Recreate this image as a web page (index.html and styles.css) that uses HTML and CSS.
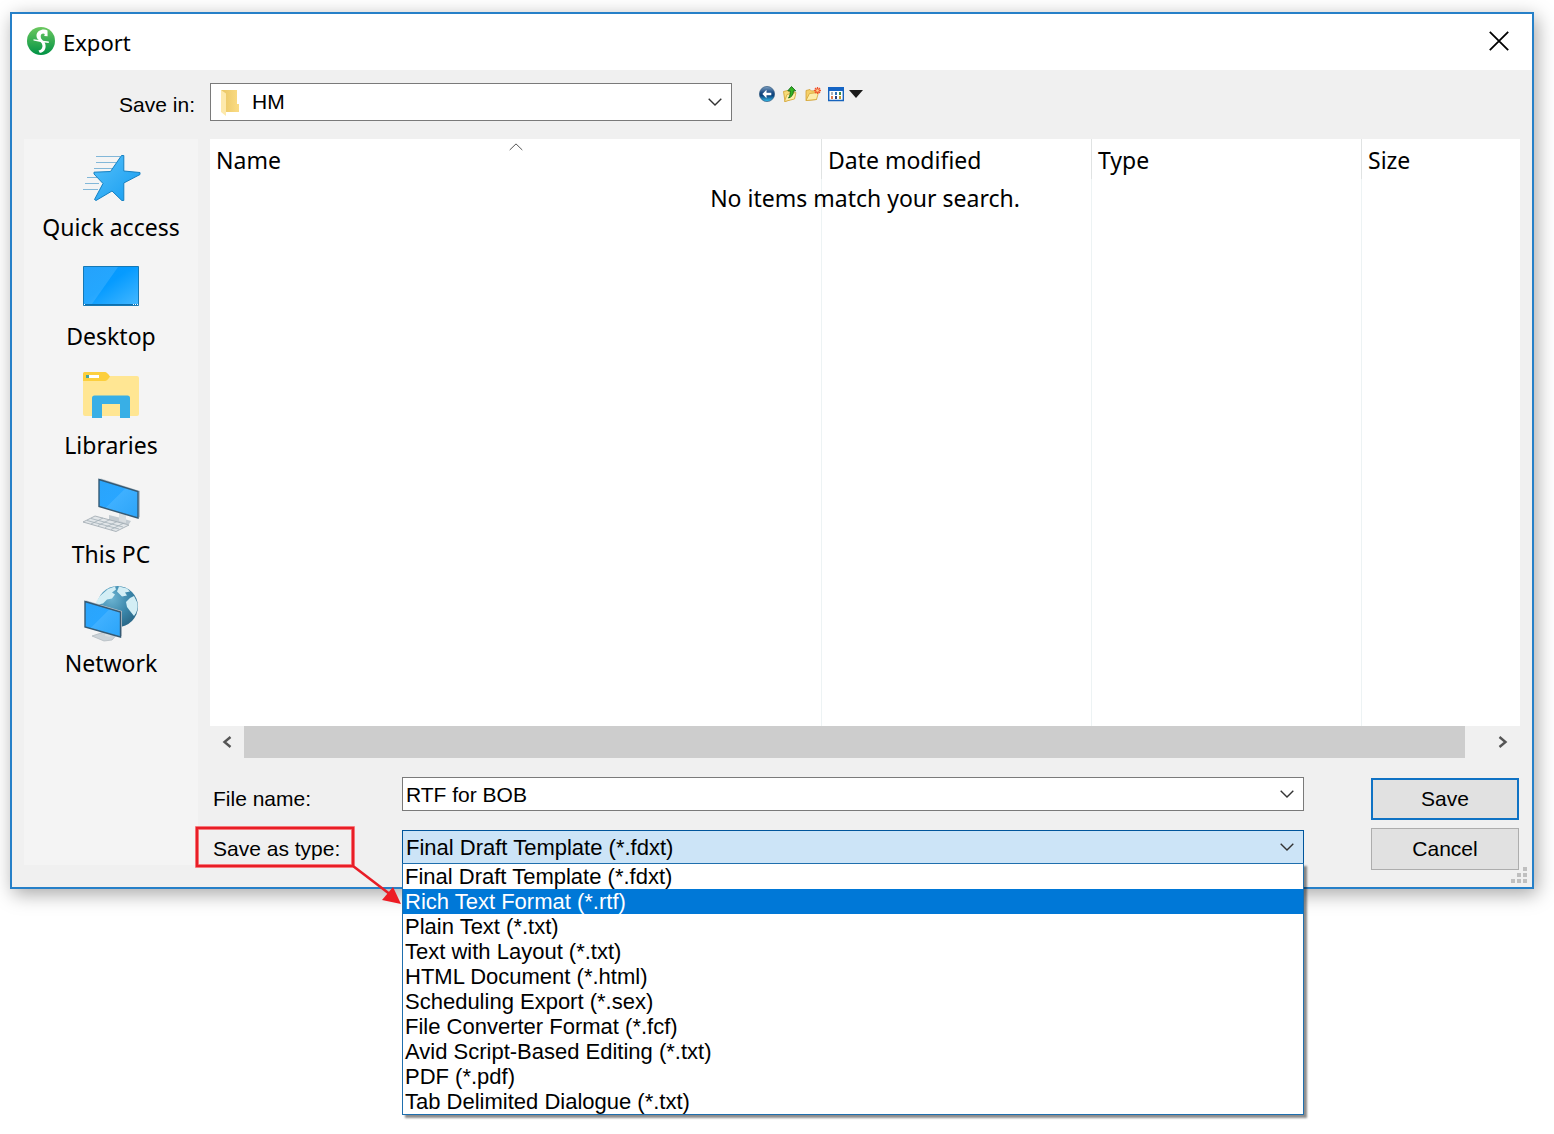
FILE: index.html
```
<!DOCTYPE html>
<html lang="en">
<head>
<meta charset="utf-8">
<meta name="viewport" content="width=device-width, initial-scale=1">
<title>Export</title>
<link rel="stylesheet" href="styles.css">
</head>
<body>
<svg class="defs" aria-hidden="true">
  <defs>
    <linearGradient id="screen" x1="0" y1="0" x2="1" y2="1"><stop offset="0" stop-color="#2aa4fb"/><stop offset=".45" stop-color="#29a6ff"/><stop offset=".46" stop-color="#3fb0ff"/><stop offset="1" stop-color="#2ba4f8"/></linearGradient>
    <linearGradient id="desk" x1="0" y1="0" x2="1" y2="1"><stop offset="0" stop-color="#0796fb"/><stop offset=".45" stop-color="#069bff"/><stop offset="1" stop-color="#45b8ff"/></linearGradient>
    <linearGradient id="star" x1="0" y1="0" x2="1" y2="1"><stop offset="0" stop-color="#55c0fa"/><stop offset="1" stop-color="#159cf0"/></linearGradient>
    <linearGradient id="leaf" x1="0" y1="0" x2="0" y2="1"><stop offset="0" stop-color="#6cc85f"/><stop offset="1" stop-color="#009245"/></linearGradient>
    <radialGradient id="globe" cx=".35" cy=".3" r=".75"><stop offset="0" stop-color="#6db4d2"/><stop offset=".6" stop-color="#3a86aa"/><stop offset="1" stop-color="#2a6888"/></radialGradient>
    <linearGradient id="orb" x1="0" y1="0" x2="0" y2="1"><stop offset="0" stop-color="#7f9fc0"/><stop offset=".4" stop-color="#1d4f86"/><stop offset=".6" stop-color="#0a437c"/><stop offset="1" stop-color="#35c0ee"/></linearGradient>
    <linearGradient id="fold" x1="0" y1="0" x2="1" y2="0"><stop offset="0" stop-color="#e9c664"/><stop offset="1" stop-color="#fbdc85"/></linearGradient>
  </defs>
</svg>

<main class="dialog">
  <header class="titlebar">
    <svg class="app-icon" viewBox="0 0 28 28" aria-hidden="true">
      <circle cx="14" cy="14" r="14" fill="url(#leaf)"/>
      <path d="M20.500 3.500C16.500 1.200 9.500 3.400 9.500 8.600c0 2.200.8 3.600 2.300 4.500l-5.300-.8v1.300l7 1.300c1.800 1.700 2.700 3.900 1.300 6.700-.7 1.300-2.300 1.800-3.300 1.800l1.200 2.400c2.800.2 5.900-2.400 5.900-6.300 0-1.900-.4-3.200-1.100-4l4.300.5v-1.500l-5.700-.8c-1.700-1.200-2.700-2.800-2.300-5.100.3-2 2.300-2.700 4-1.600l-.6 2 3.400.3z" fill="#fff"/>
    </svg>
    <h1 class="title">Export</h1>
    <button class="close" type="button" aria-label="Close">
      <svg viewBox="0 0 20 20" width="20" height="20"><path d="M.8.800l18.400 18.400M19.200.800L.8 19.200" stroke="#000" stroke-width="1.800"/></svg>
    </button>
  </header>

  <form class="content">
    <div class="lookin">
      <label class="lookin-label" for="folder">Save in:</label>
      <div class="folder-box">
        <svg class="folder-icon" viewBox="0 0 20 28" aria-hidden="true"><path d="M1 2h16v14l2 0v8H6z" fill="url(#fold)"/><path d="M1 2l5 3.500V28l-5-4z" fill="#fde9ac"/></svg>
        <select class="folder-select" id="folder"><option>HM</option></select>
        <svg class="chevron" viewBox="0 0 14 8" aria-hidden="true"><path d="M.7.700L7 7 13.300.700"/></svg>
      </div>
      <div class="tools">
        <button class="tool" type="button" aria-label="Back">
          <svg viewBox="0 0 16 16"><circle cx="8" cy="8" r="7.600" fill="url(#orb)" stroke="#31597f" stroke-width=".7"/><path d="M7.500 3.800L3.400 8l4.100 4.200V9.300h4.800V6.700H7.500z" fill="#fff"/></svg>
        </button>
        <button class="tool" type="button" aria-label="Up one level">
          <svg viewBox="0 0 16 16"><path d="M1.500 5.500l4-1 1 1 5.500-1 .5 7.500-9.500 3.500z" fill="#f8dc78" stroke="#cf9d2b" stroke-width=".8"/><path d="M2.500 15.500L5 8.500l9-2-1.500 6.500z" fill="#fdeeaa" stroke="#d6a636" stroke-width=".8"/><path d="M9.500.500L5.800 4.800h2.400c.3 3-.2 5.200-1.700 7.200 3-.8 5-3.200 4.900-7.200h2.300z" fill="#34b523" stroke="#146b16" stroke-width=".9"/></svg>
        </button>
        <button class="tool" type="button" aria-label="Create new folder">
          <svg viewBox="0 0 16 16"><path d="M1 14.500V4.500l4-1 1.500 1.500 5-.5v9z" fill="#f5cf68" stroke="#d19f35" stroke-width=".8"/><path d="M1 14.500L4.500 7.500l9-1-2 7z" fill="#fdedaa" stroke="#d6a636" stroke-width=".8"/><path d="M12.500 1v7M9 4.500h7M10 2l5 5M15 2l-5 5" stroke="#f0532d" stroke-width="1.300"/><circle cx="12.500" cy="4.500" r="1.300" fill="#ffd08a"/></svg>
        </button>
        <button class="tool view" type="button" aria-label="View menu">
          <svg viewBox="0 0 16 16"><path d="M.700 1.700h14.600v12.800H.700z" fill="#fff" stroke="#1663bd" stroke-width="1.400"/><path d="M0 1h16v4H0z" fill="#1464c4"/><g fill="#3070b5"><path d="M3 6h2v3H3z" fill="#a9b3bb"/><path d="M7 6h2v3H7z"/><path d="M11 6h2v3h-2z" fill="#398a4b"/><path d="M3 10h2v3H3z" fill="#e07a4a"/><path d="M7 10h2v3H7z" fill="#27427f"/><path d="M11 10h2v3h-2z" fill="#c39c31"/></g></svg>
          <svg class="caret" viewBox="0 0 14 8"><path d="M0 0h14L7 8z" fill="#1b1b1b"/></svg>
        </button>
      </div>
    </div>

    <nav class="places" aria-label="Places">
      <button class="place" type="button">
        <svg class="place-icon" viewBox="0 0 56 56"><g stroke="#5da3cf" stroke-width="1"><path d="M13 6.500h24M13 12.500h20M11 18.500h18M4 27.500h10M2 33.500h14M0 39.500h15" opacity=".75"/></g><path d="M38.500 5.500h2.300V21l16.200 1.500v2L40.800 33v17.500h-2L29 41 13 50.500l-1.500-1L20 33.500 11 24v-1.800l16.500-.7z" fill="url(#star)" stroke="#1480c2" stroke-width="1" stroke-linejoin="round"/></svg>
        <span>Quick access</span>
      </button>
      <button class="place" type="button">
        <svg class="place-icon" viewBox="0 0 56 56"><path d="M.500 7.500h55v39H.500z" fill="url(#desk)" stroke="#1578b5"/><path d="M1 8h34L9 45H1z" fill="#fff" opacity=".12"/><path d="M1 45.500h54" stroke="#0c6fae"/><path d="M1 45.500h1M50 45.500h1M52 45.500h1M54 45.500h1" stroke="#fff"/></svg>
        <span>Desktop</span>
      </button>
      <button class="place" type="button">
        <svg class="place-icon" viewBox="0 0 56 56"><path d="M0 8h54a2 2 0 0 1 2 2v36a2 2 0 0 1-2 2H2a2 2 0 0 1-2-2z" fill="#ffe693"/><path d="M0 5.500A1.500 1.500 0 0 1 1.500 4H22q2 0 5 4.500-3 4.500-5 4.500H0z" fill="#fccf3d"/><path d="M3 7h13v3H3z" fill="#fff"/><path d="M3 7h3v3H3z" fill="#42a5a0"/><path d="M9 50V30a2.500 2.500 0 0 1 2.500-2.500h33A2.500 2.500 0 0 1 47 30v20H37V36H19v14z" fill="#38afe6"/></svg>
        <span>Libraries</span>
      </button>
      <button class="place" type="button">
        <svg class="place-icon" viewBox="0 0 56 56"><path d="M26 38l12 3 10 3-2 3-10 1-10-4z" fill="#c3cbd1"/><path d="M36 36v8l7 2v-8z" fill="#d8dde0"/><path d="M0 45l12-6L46 48 33 54.500z" fill="#e2e6e9" stroke="#9ca6ad" stroke-width=".8"/><path d="M4 43.500l32 8.500M8 41.500l32 8.500M8 47l12-6M15 48.500l12-6M22 50.500l12-6M28 52.500l12-6" stroke="#a2aeb6" stroke-width=".8"/><path d="M16 2.500l2-1L57 14v26l-2 1z" fill="#b9c1c8"/><path d="M16 2.500l39 12V41L16 29.500z" fill="url(#screen)" stroke="#355a74" stroke-width="1.400"/></svg>
        <span>This PC</span>
      </button>
      <button class="place" type="button">
        <svg class="place-icon" viewBox="0 0 56 56"><circle cx="34.500" cy="20.500" r="20.500" fill="url(#globe)"/><path d="M17 10l8-7 7-2.500 1 3-4 3 3 2-3 4-5 1-4 4-5 1-2 5-2-2q2-7 6-11.500zM36 .500l8 2 3 3-5 1 2 3-5 1-5-5zM47 12l4-2 3.500 7q1 8-3.500 13l-4-5-3-4-1-5z" fill="#d3eef5"/><path d="M9 50l12-4 12 3.500-4 4.500-8 1z" fill="#ccd3d8" stroke="#adb6bc" stroke-width=".7"/><path d="M22 44v6l5 1v-6z" fill="#d8dde0"/><path d="M2 15.500l1.500-1L39 25v25l-2 1z" fill="#b9c1c8"/><path d="M2 15.500l35.500 10.500v25L2 41z" fill="url(#screen)" stroke="#355a74" stroke-width="1.400"/></svg>
        <span>Network</span>
      </button>
    </nav>

    <section class="files">
      <div class="list">
        <table class="table">
          <colgroup><col><col class="col-date"><col class="col-type"><col class="col-size"></colgroup>
          <thead><tr>
            <th scope="col" aria-sort="ascending">Name<svg class="sort" viewBox="0 0 14 8" aria-hidden="true"><path d="M.7 7L7 .9 13.300 7"/></svg></th>
            <th scope="col">Date modified</th><th scope="col">Type</th><th scope="col">Size</th>
          </tr></thead>
          <tbody><tr><td></td><td></td><td></td><td></td></tr></tbody>
        </table>
        <p class="empty">No items match your search.</p>
      </div>
      <div class="scrollbar">
        <button class="scroll-btn" type="button" aria-label="Scroll left"><svg viewBox="0 0 10 12"><path d="M8.500 1L2.500 6l6 5"/></svg></button>
        <div class="thumb"></div>
        <button class="scroll-btn" type="button" aria-label="Scroll right"><svg viewBox="0 0 10 12"><path d="M1.500 1l6 5-6 5"/></svg></button>
      </div>

      <div class="form">
        <div class="fields">
          <label class="field-label" for="filename">File name:</label>
          <div class="combo">
            <input class="control" id="filename" type="text" value="RTF for BOB">
            <svg class="chevron" viewBox="0 0 14 8" aria-hidden="true"><path d="M.7.700L7 7 13.300.700"/></svg>
          </div>
          <label class="field-label marked" for="filetype">Save as type:
            <svg class="callout" width="212" height="86" viewBox="0 0 212 86" aria-hidden="true"><g fill="none" stroke="#fb9a9c" stroke-width="4"><path d="M4 4h156v38H4z"/></g><path d="M4 4h156v38H4zM160 42l38 29" fill="none" stroke="#e81e27" stroke-width="2.600"/><path d="M208 80l-19-4 11-13z" fill="#ed1c24"/></svg>
          </label>
          <div class="combo open">
            <select class="control" id="filetype"><option>Final Draft Template (*.fdxt)</option></select>
            <svg class="chevron" viewBox="0 0 14 8" aria-hidden="true"><path d="M.7.700L7 7 13.300.700"/></svg>
            <ul class="menu" role="listbox" aria-label="Save as type">
              <li role="option">Final Draft Template (*.fdxt)</li>
              <li role="option" class="active" aria-selected="true">Rich Text Format (*.rtf)</li>
              <li role="option">Plain Text (*.txt)</li>
              <li role="option">Text with Layout (*.txt)</li>
              <li role="option">HTML Document (*.html)</li>
              <li role="option">Scheduling Export (*.sex)</li>
              <li role="option">File Converter Format (*.fcf)</li>
              <li role="option">Avid Script-Based Editing (*.txt)</li>
              <li role="option">PDF (*.pdf)</li>
              <li role="option">Tab Delimited Dialogue (*.txt)</li>
            </ul>
          </div>
        </div>
        <div class="actions">
          <button class="btn primary" type="submit">Save</button>
          <button class="btn" type="button">Cancel</button>
        </div>
      </div>
    </section>
  </form>
  <svg class="grip" viewBox="0 0 16 16" aria-hidden="true"><path d="M12 0h4v4h-4zM6 6h4v4H6zM12 6h4v4h-4zM0 12h4v4H0zM6 12h4v4H6zM12 12h4v4h-4z" fill="#bfbfbf"/></svg>
</main>
</body>
</html>
```
FILE: styles.css
```
* { box-sizing: border-box; }

body {
  min-height: 100vh;
  margin: 0;
  padding: 12px 20px 12px 10px;
  background: #fff;
  color: #000;
  font: 21px/25px "Liberation Sans", Arial, sans-serif;
}

button, input, select { font: inherit; color: inherit; }
button { border: 0; background: none; padding: 0; }

.defs { position: absolute; width: 0; height: 0; }

.dialog {
  position: relative;
  border: 2px solid #2680c8;
  background: #f0f0f0;
  box-shadow: 3px 5px 18px rgba(0, 0, 0, .35);
}

.titlebar {
  display: flex;
  align-items: center;
  gap: 8px;
  height: 56px;
  padding: 0 23px 2px 15px;
  background: #fff;
}
.app-icon { width: 28px; height: 28px; }
.title {
  flex: 1;
  margin: 0;
  padding-top: 2px;
  font: 400 22px/32px "Noto Sans", sans-serif;
}
.close { display: flex; }

.content {
  display: grid;
  grid-template-columns: 174px minmax(0, 1fr);
  column-gap: 12px;
  row-gap: 18px;
  padding: 13px 12px 17px;
}

.lookin {
  grid-column: 1 / -1;
  display: grid;
  grid-template-columns: 171px minmax(0, 522px) auto;
  column-gap: 15px;
  justify-content: start;
  height: 38px;
}
.lookin-label { justify-self: end; align-self: center; padding-top: 4px; }
.folder-box {
  display: flex;
  align-items: center;
  padding: 0 9px;
  border: 1px solid #7a7a7a;
  background: #fff;
}
.folder-icon { width: 20px; height: 28px; margin-right: 12px; }
.folder-select {
  flex: 1;
  min-width: 0;
  padding: 0 0 2px;
  border: 0;
  appearance: none;
  background: none;
}
.chevron { width: 14px; height: 8px; fill: none; stroke: #333; stroke-width: 1.400; pointer-events: none; }

.tools {
  display: flex;
  align-items: flex-start;
  gap: 7px;
  padding: 3px 0 0 12px;
}
.tool { display: flex; align-items: center; gap: 5px; }
.tool svg { width: 16px; height: 16px; }
.tool .caret { width: 14px; height: 8px; }

.places {
  display: flex;
  flex-direction: column;
  gap: 15px;
  margin-bottom: 5px;
  padding-top: 11px;
  background: #f4f4f4;
}
.place {
  display: flex;
  flex-direction: column;
  align-items: center;
  gap: 4px;
  font: 23px/34px "Noto Sans", sans-serif;
}
.place-icon { width: 56px; height: 56px; overflow: visible; }

.list { position: relative; background: #fff; font: 23px/32px "Noto Sans", sans-serif; }
.table {
  width: 100%;
  height: 587px;
  border-collapse: separate;
  border-spacing: 0;
  table-layout: fixed;
}
.col-date, .col-type { width: 270px; }
.col-size { width: 158px; }
.table th {
  position: relative;
  height: 40px;
  padding: 2px 6px 0;
  border-right: 1px solid #e0e3e3;
  font-weight: 400;
  text-align: left;
}
.table td { padding: 0; border-right: 1px solid #edf3f4; }
.table th:last-child, .table td:last-child { border-right: 0; }
.sort {
  position: absolute;
  top: 4px;
  left: calc(50% - 7px);
  width: 14px;
  height: 8px;
  fill: none;
  stroke: #555;
}
.empty {
  position: absolute;
  top: 43px;
  right: 0;
  left: 0;
  margin: 0;
  text-align: center;
}

.scrollbar { display: flex; height: 32px; }
.scroll-btn { display: grid; place-items: center; width: 34px; }
.scroll-btn svg { width: 10px; height: 12px; fill: none; stroke: #555; stroke-width: 2.400; }
.thumb { flex: 1; margin-right: 21px; background: #cdcdcd; }

.form {
  display: flex;
  gap: 67px;
  padding: 19px 1px 0 3px;
}
.fields {
  flex: 1;
  display: grid;
  grid-template-columns: 189px minmax(0, 1fr);
  row-gap: 19px;
  align-content: start;
}
.field-label { align-self: center; padding-top: 8px; }
.marked { position: relative; padding-top: 2px; white-space: nowrap; }
.callout { position: absolute; top: -10px; left: -20px; z-index: 3; }
.combo {
  position: relative;
  display: flex;
  align-items: center;
  height: 34px;
  padding-right: 9px;
  border: 1px solid #7a7a7a;
  background: #fff;
}
.combo.open { border-color: #00559b; background: #cce4f7; font-size: 22px; }
.control {
  flex: 1;
  min-width: 0;
  padding: 0 3px;
  border: 0;
  appearance: none;
  background: none;
  outline: 0;
}
.menu {
  position: absolute;
  z-index: 2;
  top: 32px;
  right: -1px;
  left: -1px;
  margin: 0;
  padding: 0;
  border: 1px solid #1f6fae;
  background: #fff;
  box-shadow: 3px 3px 2px rgba(0, 0, 0, .45);
  list-style: none;
}
.menu li { padding: 0 2px; }
.menu .active { background: #0078d7; color: #fff; }

.actions { display: flex; flex-direction: column; gap: 8px; width: 148px; padding-top: 1px; }
.btn { height: 42px; padding-bottom: 2px; border: 1px solid #adadad; background: #e1e1e1; }
.btn.primary { border: 2px solid #0f72c4; }

.grip { position: absolute; right: 5px; bottom: 4px; width: 16px; height: 16px; }
```
